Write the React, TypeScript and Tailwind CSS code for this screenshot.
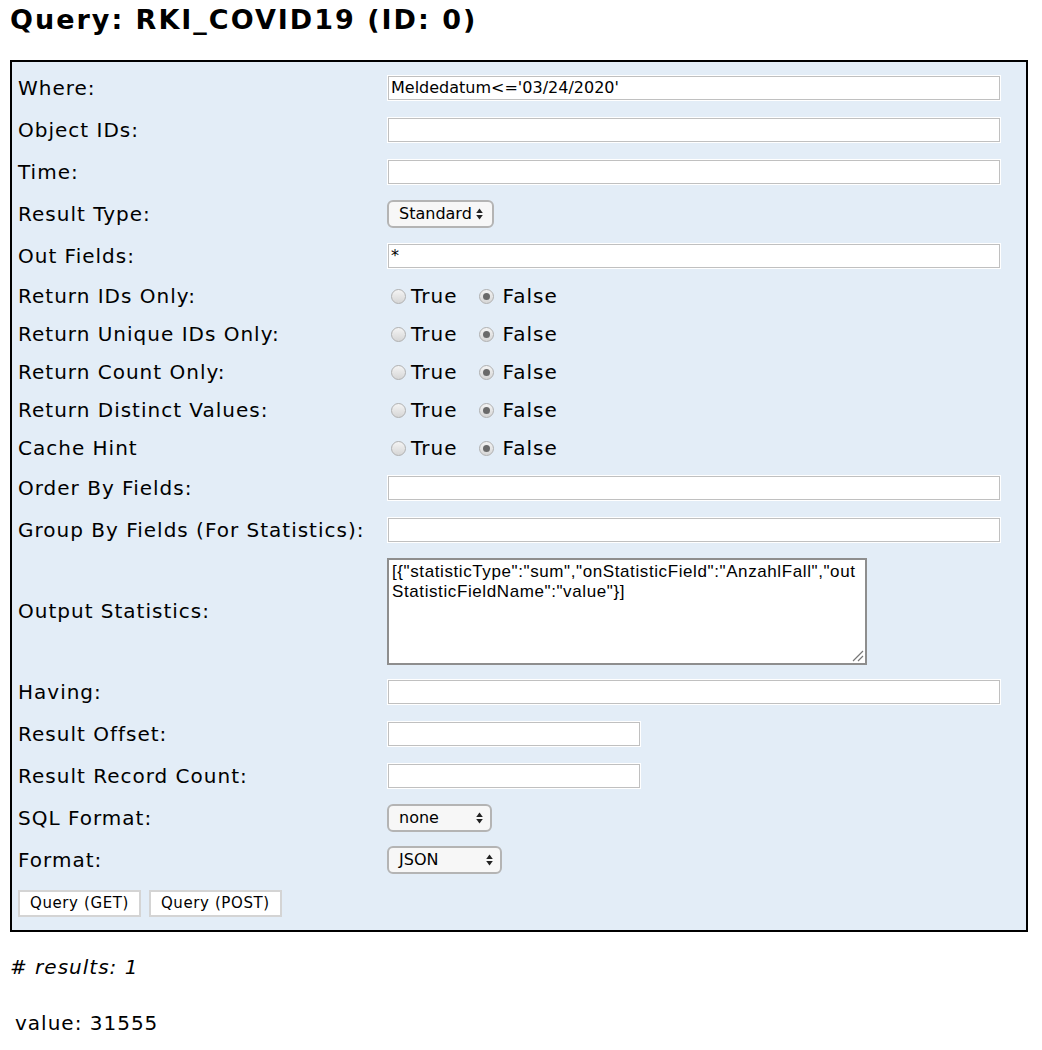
import React from "react";

const font = { fontFamily: '"DejaVu Sans", Verdana, sans-serif' };

function TextInput({ value = "", wide = true }: { value?: string; wide?: boolean }) {
  return (
    <div
      className={`h-[26px] ${wide ? "w-[614px]" : "w-[254px]"} bg-white border border-[#ffffff] flex`}
    >
      <div className="flex-1 border border-[#c0c0c0] flex items-center pl-[2px] text-[16px] leading-none text-black">
        {value}
      </div>
    </div>
  );
}

function Arrows() {
  return (
    <svg width="7" height="12" viewBox="0 0 7 12" className="shrink-0">
      <path d="M3.5 0.5 L6.8 5 L0.2 5 Z" fill="#222" />
      <path d="M3.5 11.5 L6.8 7 L0.2 7 Z" fill="#222" />
    </svg>
  );
}

function Select({ value, w, gap }: { value: string; w: string; gap: string }) {
  return (
    <div
      className={`h-[28px] ${w} rounded-[6px] border-2 border-[#b4b4b4] bg-[#f7f7f7] flex items-center pl-[10px] pr-[7px] text-[16px] leading-none text-black`}
    >
      <span className={gap}>{value}</span>
      <Arrows />
    </div>
  );
}

function Radio({ checked }: { checked: boolean }) {
  return (
    <span className="w-[15px] h-[15px] rounded-full border border-[#b0b0b0] bg-gradient-to-b from-[#f4f4f4] to-[#d6d6d6] flex items-center justify-center shrink-0">
      {checked && <span className="w-[7px] h-[7px] rounded-full bg-[#6a6a6a]" />}
    </span>
  );
}

function RadioPair() {
  return (
    <div className="flex items-center text-[20px] leading-none tracking-[1px] text-black">
      <span className="ml-[4px]"><Radio checked={false} /></span>
      <span className="ml-[5px]">True</span>
      <span className="ml-[22px]"><Radio checked={true} /></span>
      <span className="ml-[8px]">False</span>
    </div>
  );
}

function Row({ label, h = "h-[42px]", children }: { label: string; h?: string; children?: React.ReactNode }) {
  return (
    <div className={`${h} flex items-center`}>
      <div className="w-[375px] pl-[6px] text-[20px] leading-none tracking-[1px] text-black whitespace-nowrap">{label}</div>
      <div className="flex items-center">{children}</div>
    </div>
  );
}

export default function App() {
  return (
    <div className="bg-white w-[1042px] h-[1050px] overflow-hidden" style={font}>
      <h1 className="pl-[10px] pt-[4px] text-[27px] font-bold leading-[32px] tracking-[2px] text-black">
        Query: RKI_COVID19 (ID: 0)
      </h1>
      <div className="ml-[10px] mt-[24px] w-[1018px] h-[872px] border-2 border-black bg-[#e3edf7] pt-[5px]">
        <Row label="Where:"><TextInput value="Meldedatum<='03/24/2020'" /></Row>
        <Row label="Object IDs:"><TextInput /></Row>
        <Row label="Time:"><TextInput /></Row>
        <Row label="Result Type:"><Select value="Standard" w="w-[107px]" gap="mr-[4px]" /></Row>
        <Row label="Out Fields:"><TextInput value="*" /></Row>
        <Row label="Return IDs Only:" h="h-[38px]"><RadioPair /></Row>
        <Row label="Return Unique IDs Only:" h="h-[38px]"><RadioPair /></Row>
        <Row label="Return Count Only:" h="h-[38px]"><RadioPair /></Row>
        <Row label="Return Distinct Values:" h="h-[38px]"><RadioPair /></Row>
        <Row label="Cache Hint" h="h-[38px]"><RadioPair /></Row>
        <Row label="Order By Fields:"><TextInput /></Row>
        <Row label="Group By Fields (For Statistics):"><TextInput /></Row>
        <Row label="Output Statistics:" h="h-[120px]">
          <div className="relative w-[480px] h-[107px] border-2 border-[#8e8e8e] bg-white px-[3px] pt-[2px] text-[17px] leading-[20px] tracking-[0.6px] text-black whitespace-nowrap" style={{ fontFamily: '"Liberation Sans", Arial, sans-serif' }}>
            [{"{"}"statisticType":"sum","onStatisticField":"AnzahlFall","out
            <br />
            StatisticFieldName":"value"{"}"}]
            <svg width="12" height="12" viewBox="0 0 12 12" className="absolute right-[1px] bottom-[1px]">
              <path d="M1 11 L11 1 M6 11 L11 6" stroke="#777" strokeWidth="1.2" />
            </svg>
          </div>
        </Row>
        <Row label="Having:"><TextInput /></Row>
        <Row label="Result Offset:"><TextInput wide={false} /></Row>
        <Row label="Result Record Count:"><TextInput wide={false} /></Row>
        <Row label="SQL Format:"><Select value="none" w="w-[105px]" gap="mr-auto" /></Row>
        <Row label="Format:"><Select value="JSON" w="w-[115px]" gap="mr-auto" /></Row>
        <div className="flex gap-[8px] pl-[6px] pt-[9px]">
          <button className="h-[27px] px-[10px] bg-white border-2 border-[#d4d4d4] text-[15px] leading-none tracking-[0.6px] text-black" style={font}>Query (GET)</button>
          <button className="h-[27px] px-[10px] bg-white border-2 border-[#d4d4d4] text-[15px] leading-none tracking-[0.6px] text-black" style={font}>Query (POST)</button>
        </div>
      </div>
      <div className="pl-[10px] mt-[25px] text-[20px] italic leading-none tracking-[1px] text-black"># results: 1</div>
      <div className="pl-[15px] mt-[36px] text-[20px] leading-none tracking-[1px] text-black">value: 31555</div>
    </div>
  );
}
